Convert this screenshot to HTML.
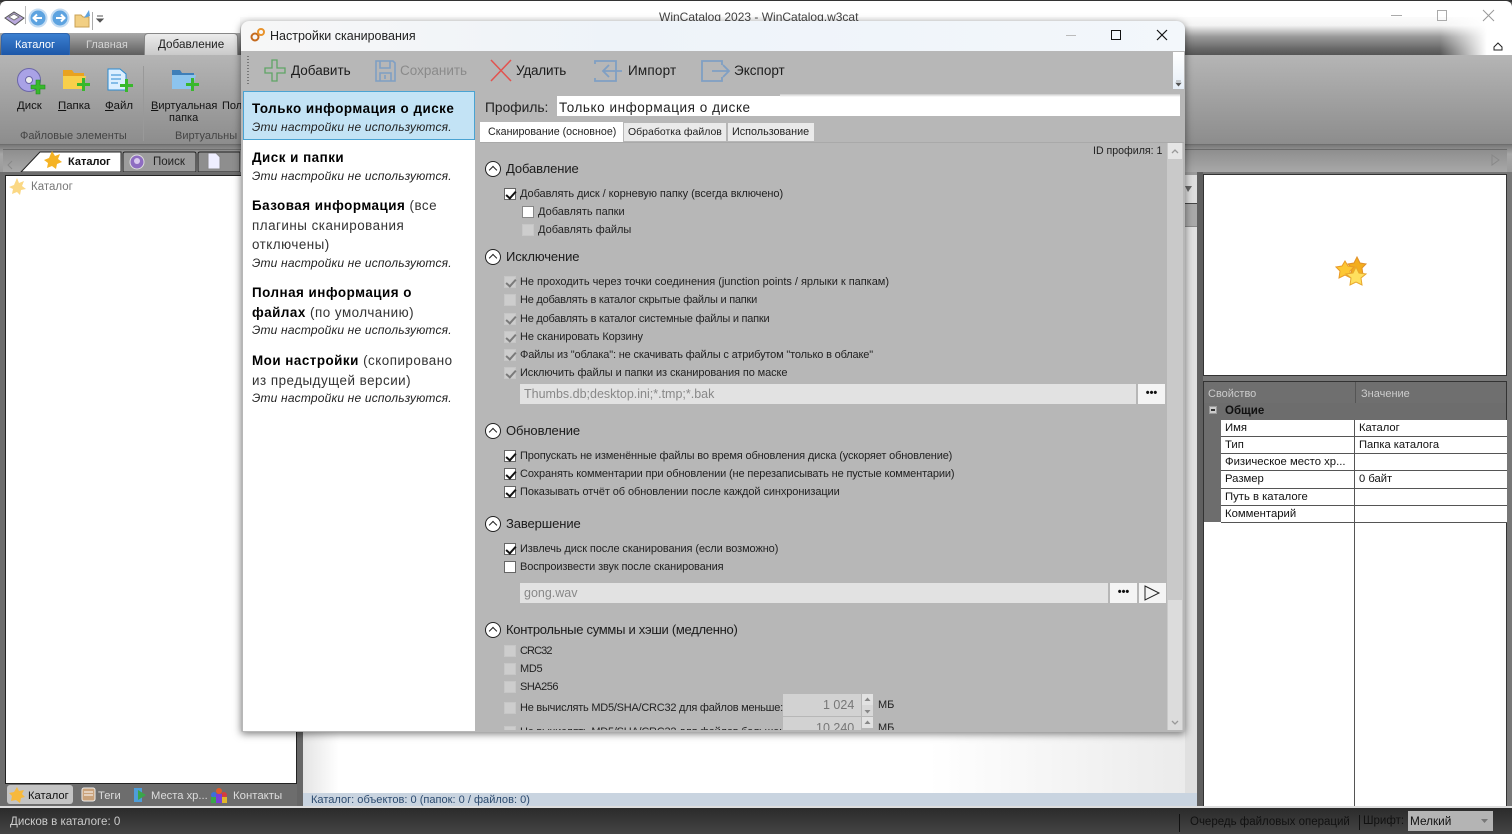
<!DOCTYPE html>
<html><head><meta charset="utf-8">
<style>
html,body{margin:0;padding:0;width:1512px;height:834px;overflow:hidden;background:#555}
*{box-sizing:border-box}
body{font-family:"Liberation Sans",sans-serif;font-size:11px;color:#111;position:relative}
.a{position:absolute}
.t{position:absolute;white-space:nowrap;line-height:14px}
.cb{position:absolute;width:12px;height:12px;background:#fff;border:1px solid #666}
.cb.d{background:#cdcdcd;border:1px solid #c6c6c6}
.cb.c::after,.cb.dc::after{content:"";position:absolute;left:3px;top:0px;width:4px;height:8px;border:solid #111;border-width:0 2px 2px 0;transform:rotate(42deg)}
.cb.dc{background:#cdcdcd;border:1px solid #c6c6c6}
.cb.dc::after{border-color:#7a7a7a}
.h{position:absolute;width:16px;height:16px;border-radius:50%;background:#fff;border:1.5px solid #222}
.h::after{content:"";position:absolute;left:4px;top:5px;width:5px;height:5px;border:solid #222;border-width:1.5px 0 0 1.5px;transform:rotate(45deg)}
.ht{position:absolute;white-space:nowrap;font-size:13px;line-height:16px;color:#1b1b1b;letter-spacing:-.1px}
.l{position:absolute;white-space:nowrap;font-size:11px;line-height:14px;color:#222}
.li b{font-weight:bold;color:#000;letter-spacing:.5px}
.li{position:absolute;left:252px;width:215px;font-size:13.4px;line-height:19.5px;color:#333;white-space:nowrap;letter-spacing:.5px}
.li i{font-size:12px;color:#222;display:block;line-height:17px;letter-spacing:.18px}
.tb{position:absolute;font-size:13.5px;line-height:16px;white-space:nowrap;color:#1c1c1c}
.rb{position:absolute;font-size:11.4px;line-height:14px;white-space:nowrap;color:#111;text-align:center}
.rg{position:absolute;font-size:11px;line-height:14px;white-space:nowrap;color:#444}
.row{position:absolute;left:1221px;width:286px;height:17px;background:#fff;border-bottom:1px solid #555}
.row span{position:absolute;left:4px;top:1px;font-size:11.3px;line-height:14px;white-space:nowrap;color:#111}
.row em{position:absolute;left:138px;top:1px;font-style:normal;font-size:11.2px;line-height:14px;white-space:nowrap;color:#111}
.btn{position:absolute;background:#f4f4f4;width:27px;height:20px;color:#111;font-weight:bold;font-size:11px;text-align:center;line-height:19px}
</style></head><body>

<!-- Top title bar -->
<div class="a" style="left:0;top:0;width:1512px;height:2px;background:#333"></div>
<div class="a" style="left:0;top:1px;width:1512px;height:32px;background:#fff;border-radius:6px 6px 0 0"></div>
<div class="a" style="left:240px;top:17px;width:1272px;height:38px;background:linear-gradient(#fbfbfb 0,#f4f4f4 22%,#999 52%,#666 85%,#555 100%)"></div>
<div class="a" style="left:1440px;top:17px;width:72px;height:38px;background:linear-gradient(90deg,rgba(255,255,255,0),#fff 65%)"></div>
<div class="t" style="left:659px;top:10px;font-size:12px;color:#444">WinCatalog 2023 - WinCatalog.w3cat</div>
<div class="a" style="left:1391px;top:15px;width:11px;height:1px;background:#aaa"></div>
<div class="a" style="left:1437px;top:10px;width:10px;height:11px;border:1px solid #aaa"></div>
<svg class="a" style="left:1340px;top:8px" width="172" height="52"><path d="M143 2 L154 13 M154 2 L143 13" stroke="#999" fill="none"/><path d="M154 39 L158 35 L162 39 V42 H154 Z" stroke="#222" fill="none"/></svg>

<!-- QAT -->
<svg class="a" style="left:0;top:6px" width="110" height="24">
<path d="M5 12 L14 6 L24 12 L15 19 Z" fill="#b9a8dc" stroke="#555"/>
<path d="M9 11 L14 8 L19 11 L14 14Z" fill="#fff" stroke="#777"/>
<circle cx="38" cy="12" r="8.500" fill="#5da3e0" stroke="#c4dcf3" stroke-width="2"/>
<path d="M42 12 H34 M37 8.500 L33.500 12 L37 15.500" stroke="#fff" stroke-width="2" fill="none"/>
<circle cx="60" cy="12" r="8.500" fill="#5da3e0" stroke="#c4dcf3" stroke-width="2"/>
<path d="M56 12 H64 M61 8.500 L64.500 12 L61 15.500" stroke="#fff" stroke-width="2" fill="none"/>
<path d="M75 9 H81 L83 11 H89 V21 H75 Z" fill="#f2cf83" stroke="#c9a255"/>
<path d="M84 12 L89 4 L90 10 Z" fill="#5da3e0"/>
<rect x="92" y="6" width="1" height="18" fill="#aaa"/>
<path d="M97 10 h6 M97 13 L100 16 L103 13 Z" fill="#555" stroke="#555"/>
</svg>
<div class="a" style="left:25px;top:6px;width:1px;height:18px;background:#bbb"></div>

<!-- Ribbon -->
<div class="a" style="left:0;top:33px;width:240px;height:22px;background:linear-gradient(#a9a9a9,#5e5e5e)"></div>
<div class="a" style="left:1px;top:33px;width:69px;height:23px;background:linear-gradient(#3b7fd0,#1d57a8);border-radius:4px 4px 0 0;border:1px solid #2f65ad"></div>
<div class="t" style="left:15px;top:38px;color:#fff;font-size:11px">Каталог</div>
<div class="t" style="left:86px;top:38px;color:#d4d4d4;font-size:11px">Главная</div>
<div class="a" style="left:144px;top:33px;width:94px;height:23px;background:linear-gradient(#ececec,#c8c8c8);border-radius:4px 4px 0 0;border:1px solid #888;border-bottom:0"></div>
<div class="t" style="left:158px;top:38px;color:#222;font-size:11.7px">Добавление</div>
<div class="a" style="left:0;top:55px;width:1512px;height:90px;background:linear-gradient(#b5b5b5,#8c8c8c)"></div>
<div class="a" style="left:0;top:144px;width:1512px;height:1px;background:#6e6e6e"></div>
<div class="a" style="left:143px;top:66px;width:1px;height:75px;background:#999"></div>

<!-- Ribbon icons -->
<svg class="a" style="left:14px;top:64px" width="190" height="34">
<circle cx="15" cy="16" r="11.500" fill="#a9a2e6" stroke="#6b66a8"/><circle cx="15" cy="16" r="3.500" fill="#eee" stroke="#6b66a8"/>
<path d="M17 21 h5 v-5 h4 v5 h5 v4 h-5 v5 h-4 v-5 h-5Z" fill="#38b82c" stroke="#1f8a1f" stroke-width=".6"/>
<path d="M49 6 H58 L60 9 H70 V24 H49 Z" fill="#e9a21f"/><path d="M49 12 H72 L69 25 H49Z" fill="#f8cf4a"/>
<path d="M63 19 h5 v-5 h3 v5 h5 v3 h-5 v5 h-3 v-5 h-5Z" fill="#38b82c"/>
<path d="M94 5 H106 L112 10 V26 H94 Z" fill="#dcefff" stroke="#2a8ad0"/><path d="M97 11 H107 M97 15 H107 M97 19 H104" stroke="#2a8ad0"/>
<path d="M106 20 h5 v-5 h3 v5 h5 v3 h-5 v5 h-3 v-5 h-5Z" fill="#38b82c"/>
<path d="M158 6 H166 L168 9 H180 V24 H158 Z" fill="#3f7fb8"/><path d="M158 11 H182 L178 25 H158Z" fill="#8cc4ee"/>
<path d="M172 19 h5 v-5 h3 v5 h5 v3 h-5 v5 h-3 v-5 h-5Z" fill="#38b82c"/>
</svg>
<div class="rb" style="left:17px;top:99px"><u>Д</u>иск</div>
<div class="rb" style="left:58px;top:99px"><u>П</u>апка</div>
<div class="rb" style="left:105px;top:99px"><u>Ф</u>айл</div>
<div class="rb" style="left:151px;top:99px;font-size:11px"><u>В</u>иртуальная</div>
<div class="rb" style="left:169px;top:111px;font-size:11px">папка</div>
<div class="rb" style="left:222px;top:99px;font-size:11px">Пол</div>
<div class="rg" style="left:20px;top:129px">Файловые элементы</div>
<div class="rg" style="left:175px;top:129px">Виртуальны</div>

<!-- Tab strip -->
<div class="a" style="left:0;top:145px;width:1512px;height:30px;background:linear-gradient(#777,#a6a6a6 30%,#999)"></div>
<div class="a" style="left:3px;top:149px;width:1504px;height:23px;background:linear-gradient(#8e8e8e,#a8a8a8);border-top:1px solid #6a6a6a"></div>
<svg class="a" style="left:0;top:148px" width="240" height="26">
<path d="M12 13 L8 17 L12 21" fill="none" stroke="#888"/>
<path d="M21 24 L40 4 H121 V24 Z" fill="#fff" stroke="#222"/>
<path d="M123 24 V6 Q123 4 125 4 H194 Q196 4 196 6 V24 Z" fill="#9c9c9c" stroke="#222"/>
<path d="M198 24 V6 Q198 4 200 4 H240 V24 Z" fill="#8e8e8e" stroke="#222"/>
<path d="M52 3 L55 8 L60 6 L58 11 L62 14 L57 16 L56 21 L52 18 L47 20 L48 15 L44 12 L49 10 Z" fill="#f5b324"/>
<circle cx="137" cy="14" r="7" fill="#8e6cc1" stroke="#ddd"/><circle cx="137" cy="13" r="3" fill="#d9c9ef"/>
<path d="M208 5 H216 L220 9 V21 H208Z" fill="#eef" stroke="#888"/>
</svg>
<div class="t" style="left:68px;top:155px;font-weight:bold;font-size:11px;color:#111">Каталог</div>
<div class="t" style="left:153px;top:155px;font-size:11.5px;color:#222">Поиск</div>
<svg class="a" style="left:1490px;top:152px" width="12" height="16"><path d="M2 3 L9 8 L2 13Z" fill="none" stroke="#888"/></svg>

<!-- Left panel -->
<div class="a" style="left:0;top:172px;width:303px;height:636px;background:#6d6d6d"></div>
<div class="a" style="left:5px;top:175px;width:292px;height:609px;background:#fff;border:1px solid #222"></div>
<svg class="a" style="left:9px;top:178px" width="18" height="18"><path d="M8 0 L10 5 L15 3 L13 8 L17 11 L12 12 L11 17 L8 14 L3 16 L4 11 L0 9 L5 7 Z" fill="#fbd884"/></svg>
<div class="t" style="left:31px;top:180px;color:#777;font-size:11.5px">Каталог</div>
<div class="a" style="left:7px;top:785px;width:66px;height:19px;background:#c4c4c4;border-radius:3px"></div>
<svg class="a" style="left:8px;top:785px" width="230" height="20">
<path d="M9 2 L11 6 L16 5 L14 9 L17 12 L13 13 L12 18 L8 15 L3 16 L4 11 L1 8 L6 7 Z" fill="#f7b93c"/>
<rect x="74" y="3" width="13" height="13" rx="2" fill="#c9a27b" stroke="#eee"/><path d="M76 7 h9 M76 10 h9" stroke="#fff"/>
<rect x="126" y="3" width="8" height="14" fill="#4f9dd8"/><path d="M130 5 L138 10 L130 15Z" fill="#3aa64a"/>
<circle cx="211" cy="6" r="3" fill="#e25b2a"/><circle cx="206" cy="10" r="3" fill="#3d6fd6"/><circle cx="216" cy="10" r="3" fill="#d63d3d"/><rect x="203" y="12" width="6" height="6" fill="#3aa64a"/><rect x="213" y="12" width="6" height="6" fill="#e2b72a"/><rect x="208" y="9" width="6" height="9" fill="#7a3dd6"/>
</svg>
<div class="t" style="left:28px;top:789px;font-size:11.2px;color:#111">Каталог</div>
<div class="t" style="left:98px;top:789px;font-size:11.2px;color:#ddd">Теги</div>
<div class="t" style="left:151px;top:789px;font-size:11.2px;color:#ddd">Места хр...</div>
<div class="t" style="left:233px;top:789px;font-size:11.4px;color:#ddd">Контакты</div>

<!-- Center panel -->
<div class="a" style="left:297px;top:172px;width:6px;height:636px;background:#666"></div>
<div class="a" style="left:303px;top:175px;width:894px;height:618px;background:linear-gradient(90deg,#e4e4e4,#fff 4%,#fff 70%,#eaeaea)"></div>
<div class="a" style="left:303px;top:793px;width:894px;height:14px;background:#c9d4e0"></div>
<div class="t" style="left:311px;top:793px;font-size:11.05px;color:#2c4a6e">Каталог: объектов: 0 (папок: 0 / файлов: 0)</div>
<div class="a" style="left:1185px;top:175px;width:12px;height:29px;background:#dedede;border-bottom:1px solid #444"></div>
<svg class="a" style="left:1185px;top:186px" width="8" height="8"><path d="M0 0 H7 L3 6Z" fill="#666"/></svg>
<div class="a" style="left:1185px;top:204px;width:12px;height:23px;background:#a9a9a9;border-bottom:1px solid #888"></div>
<div class="a" style="left:1185px;top:227px;width:12px;height:566px;background:#e0e0e0"></div>
<div class="a" style="left:1197px;top:172px;width:6px;height:636px;background:#5f5f5f"></div>

<!-- Right panel -->
<div class="a" style="left:1203px;top:172px;width:309px;height:636px;background:#777"></div>
<div class="a" style="left:1203px;top:174px;width:304px;height:202px;background:#fff;border:1px solid #333"></div>
<svg class="a" style="left:1335px;top:256px" width="36" height="34">
<path d="M22 1 L25 7 L31 8 L27 12 L28 19 L22 16 L16 19 L17 12 L13 8 L19 7 Z" fill="#f3ad1d" stroke="#e0912a"/>
<path d="M10 5 L13 10 L19 11 L15 15 L16 22 L10 19 L4 22 L5 15 L1 11 L7 10 Z" fill="#fdc733" stroke="#e99b27"/>
<path d="M21 11 L24 17 L31 18 L26 22 L27 29 L21 26 L15 29 L16 22 L11 18 L18 17 Z" fill="#ffe05e" stroke="#e8a72c"/>
</svg>
<div class="a" style="left:1203px;top:381px;width:304px;height:426px;background:#fff;border:1px solid #333"></div>
<div class="a" style="left:1204px;top:382px;width:302px;height:21px;background:#6f6f6f"></div>
<div class="a" style="left:1355px;top:382px;width:1px;height:21px;background:#555"></div>
<div class="t" style="left:1208px;top:387px;color:#ccc;font-size:11px">Свойство</div>
<div class="t" style="left:1361px;top:387px;color:#ccc;font-size:11px">Значение</div>
<div class="a" style="left:1204px;top:403px;width:302px;height:17px;background:#6d6d6d"></div>
<div class="a" style="left:1204px;top:420px;width:17px;height:102px;background:#6d6d6d"></div>
<div class="a" style="left:1209px;top:406px;width:8px;height:8px;background:#ccc;border:1px solid #999"></div>
<div class="a" style="left:1211px;top:409px;width:4px;height:2px;background:#333"></div>
<div class="t" style="left:1225px;top:404px;font-weight:bold;font-size:11.5px;color:#111">Общие</div>
<div class="row" style="top:420px;height:17px"><span>Имя</span><em>Каталог</em></div>
<div class="row" style="top:437px"><span>Тип</span><em>Папка каталога</em></div>
<div class="row" style="top:454px"><span>Физическое место хр...</span></div>
<div class="row" style="top:471px;height:18px"><span>Размер</span><em>0 байт</em></div>
<div class="row" style="top:489px"><span>Путь в каталоге</span></div>
<div class="row" style="top:506px"><span>Комментарий</span></div>
<div class="a" style="left:1354px;top:420px;width:1px;height:386px;background:#555"></div>

<!-- Status bar -->
<div class="a" style="left:0;top:806px;width:1512px;height:2px;background:#ddd"></div>
<div class="a" style="left:0;top:808px;width:1512px;height:26px;background:linear-gradient(#2b2b2b,#444)"></div>
<div class="t" style="left:10px;top:815px;color:#ccc;font-size:11.6px">Дисков в каталоге: 0</div>
<div class="t" style="left:1190px;top:815px;color:#111;font-size:11.5px">Очередь файловых операций</div>
<div class="a" style="left:1179px;top:814px;width:1px;height:18px;background:#111"></div>
<div class="a" style="left:1359px;top:815px;width:1px;height:15px;background:#111"></div>
<div class="t" style="left:1363px;top:814px;color:#111;font-size:11.5px">Шрифт:</div>
<div class="a" style="left:1408px;top:811px;width:85px;height:20px;background:#b4b4b4"></div>
<div class="t" style="left:1410px;top:814px;color:#111;font-size:11.8px">Мелкий</div>
<svg class="a" style="left:1481px;top:819px" width="8" height="6"><path d="M0 0 H7 L3.500 4Z" fill="#777"/></svg>

<!-- DIALOG -->
<div class="a" style="left:241px;top:21px;width:944px;height:711px;background:#b7b7b7;border-radius:8px 8px 2px 2px;box-shadow:0 2px 8px rgba(0,0,0,.5)"></div>
<div class="a" style="left:241px;top:21px;width:944px;height:30px;background:linear-gradient(90deg,#f7f7f7,#eef3f9 40%,#f3f7fb);border-radius:8px 8px 0 0"></div>
<svg class="a" style="left:250px;top:27px" width="16" height="16"><circle cx="5" cy="10" r="3.500" fill="none" stroke="#c46a1e" stroke-width="2"/><circle cx="11" cy="5" r="3" fill="none" stroke="#e8932c" stroke-width="2"/></svg>
<div class="t" style="left:270px;top:29px;font-size:12.5px;color:#222">Настройки сканирования</div>
<div class="a" style="left:1066px;top:35px;width:10px;height:1px;background:#bbb"></div>
<div class="a" style="left:1111px;top:30px;width:10px;height:10px;border:1.500px solid #111"></div>
<svg class="a" style="left:1156px;top:29px" width="12" height="12"><path d="M1 1 L11 11 M11 1 L1 11" stroke="#111" stroke-width="1.200"/></svg>

<!-- Toolbar -->
<div class="a" style="left:247px;top:56px;width:2px;height:28px;background-image:repeating-linear-gradient(#777 0 1px,transparent 1px 3px)"></div>
<svg class="a" style="left:262px;top:57px" width="530" height="28">
<path d="M10 3 H15 V11 H23 V16 H15 V24 H10 V16 H3 V11 H10 Z" fill="none" stroke="#5fa565" stroke-width="1.300"/>
<path d="M114 4 H131 L133 6 V24 H114 Z M118 4 V11 H128 V4 M118 24 V16 H129 V24 M123 18 V22" fill="none" stroke="#7f9fc4" stroke-width="1.600"/>
<path d="M229 3 L249 24 M249 3 L229 24" stroke="#e2534f" stroke-width="1.500"/>
<path d="M333 7 V4 H354 V24 H333 V21 M341 14 H360 M347 8 L341 14 L347 20" fill="none" stroke="#7f9fc4" stroke-width="1.800"/>
<path d="M460 8 V4 H440 V24 H460 V20 M450 14 H467 M461 8 L467 14 L461 20" fill="none" stroke="#7f9fc4" stroke-width="1.800"/>
</svg>
<div class="tb" style="left:291px;top:63px">Добавить</div>
<div class="tb" style="left:400px;top:63px;color:#8a8a8a">Сохранить</div>
<div class="tb" style="left:516px;top:63px;letter-spacing:-.2px">Удалить</div>
<div class="tb" style="left:628px;top:63px;letter-spacing:.2px">Импорт</div>
<div class="tb" style="left:734px;top:63px">Экспорт</div>
<div class="a" style="left:1173px;top:52px;width:11px;height:37px;background:linear-gradient(#fff,#e6eef7)"></div>
<svg class="a" style="left:1175px;top:80px" width="8" height="8"><path d="M1 1 H6 M1 3 H6 L3.500 6Z" fill="#555" stroke="#555" stroke-width=".6"/></svg>

<!-- Left list -->
<div class="a" style="left:243px;top:91px;width:232px;height:640px;background:#fff"></div>
<div class="a" style="left:243px;top:91px;width:232px;height:49px;background:#c3e3f5;border:1px solid #4aa3d2"></div>
<div class="li" style="top:99px"><b>Только информация о диске</b><i>Эти настройки не используются.</i></div>
<div class="li" style="top:148px"><b>Диск и папки</b><i>Эти настройки не используются.</i></div>
<div class="li" style="top:196px"><b>Базовая информация</b> (все<br>плагины сканирования<br>отключены)<i>Эти настройки не используются.</i></div>
<div class="li" style="top:283px"><b>Полная информация о</b><br><b>файлах</b> (по умолчанию)<i>Эти настройки не используются.</i></div>
<div class="li" style="top:351px"><b>Мои настройки</b> (скопировано<br>из предыдущей версии)<i>Эти настройки не используются.</i></div>

<!-- Right form head -->
<div class="t" style="left:485px;top:100px;font-size:13.8px;color:#222;line-height:16px">Профиль:</div>
<div class="a" style="left:557px;top:96px;width:623px;height:20px;background:#fff"></div>
<div class="a" style="left:780px;top:94px;width:400px;height:3px;background:linear-gradient(#c8c8c8,#fff)"></div>
<div class="t" style="left:559px;top:100px;font-size:13.5px;letter-spacing:.55px;color:#222;line-height:16px">Только информация о диске</div>
<div class="a" style="left:480px;top:122px;width:143px;height:20px;background:#fff"></div>
<div class="a" style="left:624px;top:123px;width:102px;height:18px;background:#eaeaea"></div>
<div class="a" style="left:728px;top:123px;width:86px;height:18px;background:#eaeaea"></div>
<div class="t" style="left:488px;top:125px;font-size:10.7px;color:#222">Сканирование (основное)</div>
<div class="t" style="left:628px;top:125px;font-size:10.5px;color:#222">Обработка файлов</div>
<div class="t" style="left:732px;top:125px;font-size:10.8px;color:#222">Использование</div>
<div class="a" style="left:480px;top:142px;width:704px;height:1px;background:#a9a9a9"></div>
<div class="t" style="left:1093px;top:144px;font-size:10.6px;color:#222">ID профиля: 1</div>

<!-- Scrollbar -->
<div class="a" style="left:1167px;top:143px;width:16px;height:587px;background:#c9c9c9"></div>
<div class="a" style="left:1168px;top:143px;width:14px;height:16px;background:#e5e5e5"></div>
<svg class="a" style="left:1171px;top:148px" width="8" height="6"><path d="M1 5 L4 2 L7 5" fill="none" stroke="#999" stroke-width="1.300"/></svg>
<div class="a" style="left:1168px;top:600px;width:14px;height:130px;background:#dcdcdc"></div>
<svg class="a" style="left:1171px;top:720px" width="8" height="6"><path d="M1 1 L4 4 L7 1" fill="none" stroke="#999" stroke-width="1.300"/></svg>

<!-- Sections -->
<div class="a" style="left:0;top:1px;width:1512px;height:731px">
<div class="h" style="left:485px;top:160px"></div><div class="ht" style="left:506px;top:160px">Добавление</div>
<div class="cb c" style="left:504px;top:187px"></div><div class="l" style="left:520px;top:186px;letter-spacing:-.06px">Добавлять диск / корневую папку (всегда включено)</div>
<div class="cb" style="left:522px;top:205px;border-color:#888"></div><div class="l" style="left:538px;top:204px">Добавлять папки</div>
<div class="cb d" style="left:522px;top:223px"></div><div class="l" style="left:538px;top:222px">Добавлять файлы</div>

<div class="h" style="left:485px;top:248px"></div><div class="ht" style="left:506px;top:248px">Исключение</div>
<div class="cb dc" style="left:504px;top:275px"></div><div class="l" style="left:520px;top:274px;letter-spacing:-.02px">Не проходить через точки соединения (junction points / ярлыки к папкам)</div>
<div class="cb d" style="left:504px;top:293px"></div><div class="l" style="left:520px;top:292px;letter-spacing:-.24px">Не добавлять в каталог скрытые файлы и папки</div>
<div class="cb dc" style="left:504px;top:312px"></div><div class="l" style="left:520px;top:311px;letter-spacing:-.23px">Не добавлять в каталог системные файлы и папки</div>
<div class="cb dc" style="left:504px;top:330px"></div><div class="l" style="left:520px;top:329px;letter-spacing:-.09px">Не сканировать Корзину</div>
<div class="cb dc" style="left:504px;top:348px"></div><div class="l" style="left:520px;top:347px;letter-spacing:-.16px">Файлы из "облака": не скачивать файлы с атрибутом "только в облаке"</div>
<div class="cb dc" style="left:504px;top:366px"></div><div class="l" style="left:520px;top:365px;letter-spacing:-.1px">Исключить файлы и папки из сканирования по маске</div>
<div class="a" style="left:520px;top:383px;width:616px;height:20px;background:#e2e2e2"></div>
<div class="t" style="left:524px;top:386px;font-size:12.5px;color:#888">Thumbs.db;desktop.ini;*.tmp;*.bak</div>
<div class="btn" style="left:1138px;top:383px">•••</div>

<div class="h" style="left:485px;top:422px"></div><div class="ht" style="left:506px;top:422px">Обновление</div>
<div class="cb c" style="left:504px;top:449px"></div><div class="l" style="left:520px;top:448px;letter-spacing:-.15px">Пропускать не изменённые файлы во время обновления диска (ускоряет обновление)</div>
<div class="cb c" style="left:504px;top:467px"></div><div class="l" style="left:520px;top:466px;letter-spacing:-.13px">Сохранять комментарии при обновлении (не перезаписывать не пустые комментарии)</div>
<div class="cb c" style="left:504px;top:485px"></div><div class="l" style="left:520px;top:484px;letter-spacing:-.09px">Показывать отчёт об обновлении после каждой синхронизации</div>

<div class="h" style="left:485px;top:515px"></div><div class="ht" style="left:506px;top:515px">Завершение</div>
<div class="cb c" style="left:504px;top:542px"></div><div class="l" style="left:520px;top:541px;letter-spacing:-.1px">Извлечь диск после сканирования (если возможно)</div>
<div class="cb" style="left:504px;top:560px"></div><div class="l" style="left:520px;top:559px;letter-spacing:-.13px">Воспроизвести звук после сканирования</div>
<div class="a" style="left:520px;top:582px;width:588px;height:20px;background:#e2e2e2"></div>
<div class="t" style="left:524px;top:585px;font-size:12.5px;color:#888">gong.wav</div>
<div class="btn" style="left:1110px;top:582px">•••</div>
<div class="btn" style="left:1139px;top:582px"></div>
<svg class="a" style="left:1144px;top:584px" width="18" height="16"><path d="M1 1 L15 8 L1 15 Z" fill="none" stroke="#222"/></svg>

<div class="h" style="left:485px;top:621px"></div><div class="ht" style="left:506px;top:621px;letter-spacing:-.28px">Контрольные суммы и хэши (медленно)</div>
<div class="cb d" style="left:504px;top:644px"></div><div class="l" style="left:520px;top:643px;letter-spacing:-.9px">CRC32</div>
<div class="cb d" style="left:504px;top:662px"></div><div class="l" style="left:520px;top:661px;letter-spacing:-.3px">MD5</div>
<div class="cb d" style="left:504px;top:680px"></div><div class="l" style="left:520px;top:679px;letter-spacing:-.5px">SHA256</div>
<div class="cb d" style="left:504px;top:701px"></div><div class="l" style="left:520px;top:700px;letter-spacing:-.24px">Не вычислять MD5/SHA/CRC32 для файлов меньше:</div>
<div class="a" style="left:783px;top:693px;width:78px;height:22px;background:#d2d2d2"></div>
<div class="t" style="left:823px;top:697px;font-size:12.5px;color:#777">1 024</div>
<div class="a" style="left:862px;top:693px;width:11px;height:11px;background:#e2e2e2"></div>
<div class="a" style="left:862px;top:704px;width:11px;height:11px;background:#d8d8d8"></div>
<svg class="a" style="left:864px;top:696px" width="8" height="18"><path d="M0.500 4 L3.500 0.500 L6.500 4Z M0.500 13 L3.500 16.500 L6.500 13Z" fill="#888"/></svg>
<div class="l" style="left:878px;top:697px">МБ</div>
</div>
<div class="a" style="left:480px;top:716px;width:687px;height:14px;overflow:hidden">
<div class="cb d" style="left:24px;top:10px"></div>
<div class="l" style="left:40px;top:9px;letter-spacing:-.24px">Не вычислять MD5/SHA/CRC32 для файлов больше:</div>
<div class="a" style="left:303px;top:1px;width:78px;height:22px;background:#d2d2d2"></div>
<div class="t" style="left:336px;top:5px;font-size:12.5px;color:#777">10 240</div>
<div class="a" style="left:382px;top:1px;width:11px;height:11px;background:#e2e2e2"></div>
<svg class="a" style="left:384px;top:4px" width="8" height="6"><path d="M0.500 4 L3.500 0.500 L6.500 4Z" fill="#888"/></svg>
<div class="l" style="left:398px;top:5px">МБ</div>
</div>

</body></html>
